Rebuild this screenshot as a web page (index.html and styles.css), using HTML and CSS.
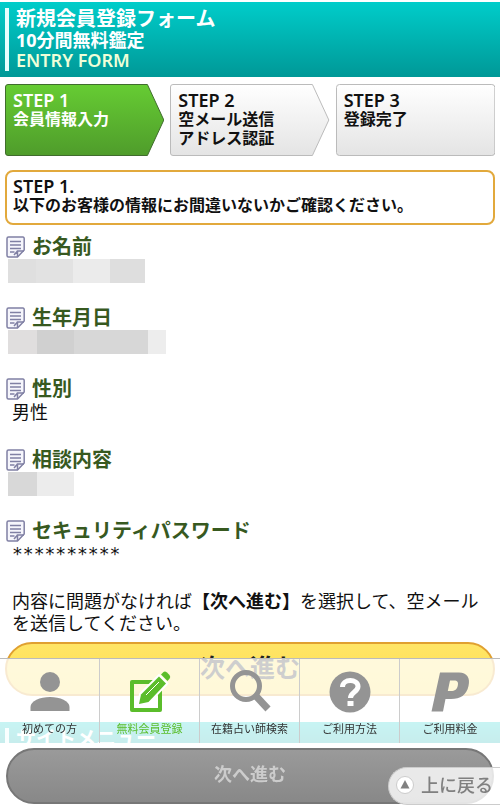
FILE: index.html
```html
<!DOCTYPE html>
<html lang="ja">
  <head>
    <meta charset="UTF-8" />
    <meta name="viewport" content="width=device-width, initial-scale=1.0" />
    <title>新規会員登録フォーム</title>
    <link rel="stylesheet" href="styles.css">
  </head>
  <body>
    <svg width="0" height="0" class="defs" aria-hidden="true">
      <defs>
        <linearGradient id="green" x1="0" y1="0" x2="0" y2="1">
          <stop offset="0" stop-color="#66cc33" />
          <stop offset="1" stop-color="#4f9c2b" />
        </linearGradient>
        <linearGradient id="silver" x1="0" y1="0" x2="0" y2="1">
          <stop offset="0" stop-color="#ffffff" />
          <stop offset="1" stop-color="#e4e4e4" />
        </linearGradient>
      </defs>
      <symbol id="note" viewBox="0 0 20 22">
        <path d="M3.500 1H18a1.500 1.500 0 0 1 1.200 1.500V14L12.500 21H3.500A1.500 1.500 0 0 1 2 19.500V2.500A1.500 1.500 0 0 1 3.500 1Z" fill="#f6f6fc" stroke="#8080a4" stroke-width="1.500" />
        <path d="M5 5.500H16M5 9H16M5 12.500H16M5 16H9.500M12.500 21V15H19M9 19L12.500 15" fill="none" stroke="#8080a4" stroke-width="1.500" />
      </symbol>
    </svg>

    <header class="title-bar">
      <div class="title-inner">
        <h1>新規会員登録フォーム</h1>
        <p class="sub">10分間無料鑑定</p>
        <p class="en">ENTRY FORM</p>
      </div>
    </header>

    <main>
      <ol class="steps">
        <li class="current">
          <svg viewBox="0 0 160 72" preserveAspectRatio="none" aria-hidden="true">
            <path d="M3 .5H143L159.500 36 143 71.500H3A2.500 2.500 0 0 1 .5 69V3A2.500 2.500 0 0 1 3 .5Z" fill="url(#green)" stroke="#3f6b2c" />
          </svg>
          <span class="step-no">STEP 1</span>会員情報入力
        </li>
        <li>
          <svg viewBox="0 0 160 72" preserveAspectRatio="none" aria-hidden="true">
            <path d="M3 .5H143L159.500 36 143 71.500H3A2.500 2.500 0 0 1 .5 69V3A2.500 2.500 0 0 1 3 .5Z" fill="url(#silver)" stroke="#bbb" />
          </svg>
          <span class="step-no">STEP 2</span>空メール送信<br>アドレス認証
        </li>
        <li>
          <svg viewBox="0 0 160 72" preserveAspectRatio="none" aria-hidden="true">
            <rect x=".5" y=".5" width="159" height="71" rx="3" fill="url(#silver)" stroke="#bbb" />
          </svg>
          <span class="step-no">STEP 3</span>登録完了
        </li>
      </ol>

      <p class="guide"><span class="step-no">STEP 1.</span>以下のお客様の情報にお間違いないかご確認ください。</p>

      <dl class="entry">
        <dt><svg class="note"><use href="#note" /></svg>お名前</dt>
        <dd class="mask mask-name"></dd>
        <dt><svg class="note"><use href="#note" /></svg>生年月日</dt>
        <dd class="mask mask-birth"></dd>
        <dt><svg class="note"><use href="#note" /></svg>性別</dt>
        <dd>男性</dd>
        <dt><svg class="note"><use href="#note" /></svg>相談内容</dt>
        <dd class="mask mask-topic"></dd>
        <dt><svg class="note"><use href="#note" /></svg>セキュリティパスワード</dt>
        <dd class="password">**********</dd>
      </dl>

      <p class="notice">内容に問題がなければ<b>【次へ進む】</b>を選択して、空メールを送信してください。</p>
      <button type="submit" class="next">次へ進む</button>
    </main>

    <section class="title-bar menu">
      <div class="title-inner">
        <h2>サイトメニュー</h2>
      </div>
    </section>

    <!-- 画面下に固定 -->
    <div class="fixed-bottom">
      <nav>
        <a href="#">
          <svg viewBox="0 0 44 44"><circle cx="22" cy="12" r="10" /><path d="M2.500 41V37C2.500 31 12 27 22 27S41.500 31 41.500 37V41Z" /></svg>
          初めての方
        </a>
        <a href="#" class="active">
          <svg viewBox="0 0 44 44">
            <path d="M4 12H32V40H4Z" fill="none" stroke="#5bbd2b" stroke-width="4" stroke-linejoin="round" />
            <path d="M11 34L13 24.500 31 6.500 38 13.500 20.500 32Z" stroke="#fff" stroke-width="4" paint-order="stroke" />
            <path d="M33 4.500L35.500 2Q37 .8 39 2.500L41.500 5Q43 7 41.500 8.800L39.500 11Z" />
            <path d="M18 25L31 12" stroke="#fff" stroke-width="1" />
          </svg>
          無料会員登録
        </a>
        <a href="#">
          <svg viewBox="0 0 44 44"><circle cx="18" cy="16" r="13.500" fill="none" stroke="#949494" stroke-width="5" /><path d="M27 25L40 39" stroke="#949494" stroke-width="7" /></svg>
          在籍占い師検索
        </a>
        <a href="#">
          <svg viewBox="0 0 44 44"><circle cx="22" cy="22" r="20.500" /><path d="M14.500 17C14.500 8.500 30 8.500 30 16.500C30 22 22.500 22 22.500 28" fill="none" stroke="#fff" stroke-width="5" /><path d="M19.500 31H25.500V36H19.500Z" fill="#fff" /></svg>
          ご利用方法
        </a>
        <a href="#">
          <svg viewBox="0 0 44 44"><path fill-rule="evenodd" d="M12 2.500H31C39 2.500 42.500 8 40.500 16C38.500 25 32.500 29 23 29H17.500L15 41.500H3.500ZM22 10.500L19.800 21H23C27 21 29 19.500 29.800 15.500C30.500 12 29.500 10.500 26 10.500Z" /></svg>
          ご利用料金
        </a>
      </nav>
      <div class="submit-bar">
        <button type="button" class="next-fixed">次へ進む</button>
      </div>
      <a href="#" class="to-top">
        <svg viewBox="0 0 18 18"><circle cx="9" cy="9" r="8.500" fill="#fff" stroke="#ccc" /><path d="M9 4L13.500 12.500H4.500Z" fill="#808080" /></svg>
        上に戻る
      </a>
    </div>
  </body>
</html>
```

FILE: styles.css
```css
* {
  box-sizing: border-box;
}
body {
  margin: 0;
  padding-top: 2px;
  background: #fff;
  color: #111;
  font-family: "Noto Sans", "Noto Sans CJK JP", sans-serif;
  font-size: 18px;
  line-height: 22px;
}
h1,
h2,
p,
dl,
dd,
ol {
  margin: 0;
  padding: 0;
}
.defs {
  position: absolute;
}
button {
  display: block;
  width: 100%;
  padding: 0 0 6px;
  font-family: inherit;
  font-weight: bold;
  cursor: pointer;
}
a {
  text-decoration: none;
}

/* タイトル */
.title-bar {
  padding: 6px 5px;
  background: linear-gradient(#00cdca, #009897);
  color: #fff;
  font-weight: bold;
}
.title-inner {
  border-left: 4px solid #e4ffff;
  padding-left: 7px;
}
.title-bar h1,
.title-bar h2 {
  font-size: 20px;
  line-height: 22px;
}
.sub {
  font-size: 18px;
  line-height: 21px;
}
.en {
  padding-bottom: 2px;
  color: #efffd8;
  font-weight: 600;
  line-height: 18px;
}

main {
  padding: 7px 5px 0;
}

/* ステップ */
.steps {
  display: grid;
  grid-template-columns: repeat(3, 1fr);
  gap: 6px;
  list-style: none;
}
.steps li {
  position: relative;
  z-index: 0;
  min-height: 72px;
  padding: 7px 8px;
  font-size: 16px;
  font-weight: bold;
  line-height: 19px;
}
.steps svg {
  position: absolute;
  z-index: -1;
  top: 0;
  left: 0;
  width: 100%;
  height: 100%;
}
.steps .current {
  color: #fff;
}
.step-no {
  display: block;
  font-size: 18px;
  font-weight: 600;
}

.guide {
  margin: 14px 0 10px;
  padding: 5px 6px 8px;
  border: 2px solid #e2a93c;
  border-radius: 8px;
  font-size: 16px;
  font-weight: bold;
  line-height: 19px;
}

/* 入力内容 */
.entry dt {
  display: flex;
  align-items: center;
  gap: 7px;
  color: #37591f;
  font-size: 20px;
  font-weight: bold;
  line-height: 24px;
}
.note {
  width: 20px;
  height: 22px;
}
.entry dd {
  height: 24px;
  margin-bottom: 23px;
  padding-left: 7px;
}
.entry .mask {
  margin-left: 3px;
}
.mask-name {
  width: 137px;
  background: linear-gradient(90deg, #dfdfdf 28px, #e2e2e2 28px 65px, #ebebeb 65px 102px, #dedede 102px);
}
.mask-birth {
  width: 158px;
  background: linear-gradient(90deg, #e0dede 29px, #d0d0d0 29px 66px, #d7d7d7 66px 140px, #ededed 140px);
}
.mask-topic {
  width: 66px;
  background: linear-gradient(90deg, #d8d8d8 29px, #ececec 29px);
}
.entry .password {
  font-family: "DejaVu Sans Mono", monospace;
}

.notice {
  padding: 0 7px;
}
.next {
  height: 54px;
  margin-top: 8px;
  border: 2px solid #e0a030;
  border-radius: 27px;
  background: linear-gradient(#ffe566, #ffdf50);
  color: #222;
  font-size: 25px;
}
.menu {
  margin-top: 26px;
}

/* 固定メニュー */
.fixed-bottom {
  position: fixed;
  right: 0;
  bottom: 0;
  left: 0;
}
nav {
  display: grid;
  grid-template-columns: repeat(5, 1fr);
  border-top: 1px solid #bbb;
  background: rgba(255, 255, 255, 0.78);
}
nav a {
  display: flex;
  flex-direction: column;
  align-items: center;
  gap: 7px;
  padding: 11px 0 6px;
  border-right: 1px solid #ccc;
  color: #333;
  font-size: 11px;
  line-height: 16px;
}
nav a:last-child {
  border-right: 0;
}
nav svg {
  width: 44px;
  height: 44px;
  fill: #949494;
}
nav .active {
  color: #5bbd2b;
}
nav .active svg {
  fill: #5bbd2b;
}
.submit-bar {
  padding: 5px 6px 8px;
  background: #fff;
}
.next-fixed {
  height: 56px;
  border: 2px solid #777;
  border-radius: 28px;
  background: linear-gradient(#9a9a9a, #888);
  color: #ccc;
  font-size: 18px;
}
.to-top {
  position: absolute;
  right: 0;
  bottom: 7px;
  display: flex;
  align-items: center;
  gap: 7px;
  height: 38px;
  padding: 0 7px 2px;
  border: 1px solid #ccc;
  border-right: 0;
  border-radius: 19px 0 0 19px;
  background: rgba(255, 255, 255, 0.8);
  color: #808080;
  font-weight: 500;
}
.to-top svg {
  width: 18px;
  height: 18px;
}
```
